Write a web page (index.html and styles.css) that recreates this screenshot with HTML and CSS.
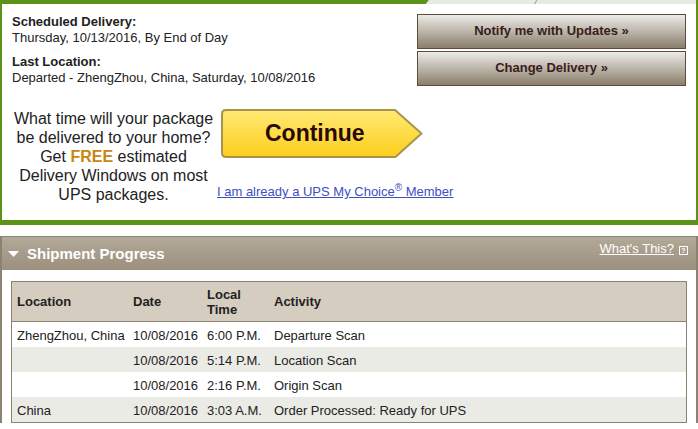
FILE: index.html
```html
<!DOCTYPE html>
<html lang="en">
<head>
<meta charset="utf-8">
<title>Tracking</title>
<link rel="stylesheet" href="styles.css">
</head>
<body>
<div class="tracking">
  <svg class="tabs" width="698" height="4" viewBox="0 0 698 4">
    <polygon points="0,0 429,0 426,4 0,4" fill="#5b9218"/>
    <polygon points="429,0 696,0 696,4 426,4" fill="#e9e9e3"/>
    <line x1="537" y1="0" x2="534.5" y2="4" stroke="#9a9a92" stroke-width="1"/>
    <rect x="696" y="0" width="2" height="4" fill="#5b9218"/>
  </svg>
  <div class="summary">
    <div class="summary-top">
      <div class="info">
        <div class="label">Scheduled Delivery:</div>
        <div>Thursday, 10/13/2016, By End of Day</div>
        <div class="label gap">Last Location:</div>
        <div>Departed - ZhengZhou, China, Saturday, 10/08/2016</div>
      </div>
      <div class="actions">
        <button class="btn" type="button">Notify me with Updates »</button>
        <button class="btn" type="button">Change Delivery »</button>
      </div>
    </div>
    <div class="promo">
      <p class="promo-text">What time will your package<br>be delivered to your home?<br>Get <b>FREE</b> estimated<br>Delivery Windows on most<br>UPS packages.</p>
      <div class="promo-action">
        <a class="continue" href="#">
          <svg width="202" height="49" viewBox="0 0 202 49">
            <defs>
              <linearGradient id="yel" x1="0" y1="0" x2="0" y2="1">
                <stop offset="0" stop-color="#ffe974"/>
                <stop offset="1" stop-color="#fccf1c"/>
              </linearGradient>
            </defs>
            <path d="M5,1 H174 L200.5,24.5 L174.5,48 H5 Q1,48 1,44 V5 Q1,1 5,1 Z" fill="url(#yel)" stroke="#a8934e" stroke-width="2" stroke-linejoin="round"/>
          </svg>
          <span>Continue</span>
        </a>
        <a class="member" href="#">I am already a UPS My Choice<sup>®</sup> Member</a>
      </div>
    </div>
  </div>
</div>

<div class="progress">
  <div class="progress-head">
    <svg class="caret" width="11" height="6" viewBox="0 0 11 6"><polygon points="0,0 11,0 5.5,6" fill="#fff"/></svg>
    <span class="title">Shipment Progress</span>
    <div class="whats">
      <a href="#">What's This?</a>
      <span class="help">?</span>
    </div>
  </div>
  <div class="progress-body">
    <table class="events">
      <thead>
        <tr>
          <th class="c1">Location</th>
          <th class="c2">Date</th>
          <th class="c3">Local<br>Time</th>
          <th class="c4">Activity</th>
        </tr>
      </thead>
      <tbody>
        <tr><td>ZhengZhou, China</td><td>10/08/2016</td><td>6:00 P.M.</td><td>Departure Scan</td></tr>
        <tr><td></td><td>10/08/2016</td><td>5:14 P.M.</td><td>Location Scan</td></tr>
        <tr><td></td><td>10/08/2016</td><td>2:16 P.M.</td><td>Origin Scan</td></tr>
        <tr><td>China</td><td>10/08/2016</td><td>3:03 A.M.</td><td>Order Processed: Ready for UPS</td></tr>
      </tbody>
    </table>
  </div>
</div>
</body>
</html>
```

FILE: styles.css
```css
* { box-sizing: border-box; }

body {
  margin: 0;
  width: 698px;
  font-family: "Liberation Sans", Arial, sans-serif;
  font-size: 13px;
  color: #222;
  background: #fff;
}

.tabs { display: block; }

.summary {
  height: 221px;
  border-left: 2px solid #5b9218;
  border-right: 2px solid #5b9218;
  border-bottom: 5px solid #5b9218;
}

.summary-top {
  display: flex;
  justify-content: space-between;
  padding: 8px 10px 0 10px;
}

.info { line-height: 16px; margin-top: 2px; }
.label { font-weight: bold; }
.gap { margin-top: 8px; }

.actions {
  display: flex;
  flex-direction: column;
  gap: 2px;
  margin-top: 2px;
  width: 269px;
}

.btn {
  height: 35px;
  border: 1px solid #5d4c38;
  background: linear-gradient(#ecebe6, #8a7e6c);
  font: bold 13px "Liberation Sans", Arial, sans-serif;
  color: #3a1c1c;
  padding: 0 0 2px;
  cursor: pointer;
}

.promo {
  display: flex;
  margin-top: 23px;
  padding-left: 10px;
}

.promo-text {
  margin: 0;
  width: 203px;
  text-align: center;
  font-size: 16px;
  line-height: 19px;
  color: #222;
}

.promo-text b { color: #c8850f; }

.promo-action {
  margin-left: 2px;
  display: flex;
  flex-direction: column;
  align-items: flex-start;
}

.continue {
  position: relative;
  display: flex;
  align-items: center;
  width: 202px;
  height: 49px;
  margin-left: 4px;
  padding-left: 44px;
  font-size: 23px;
  font-weight: bold;
  color: #2a0808;
  text-decoration: none;
}

.continue svg { position: absolute; left: 0; top: 0; }
.continue span { position: relative; }

.member {
  margin-top: 26px;
  color: #3e4fc2;
  font-size: 13px;
  line-height: 15px;
}

.member sup {
  font-size: 10px;
  line-height: 0;
  vertical-align: 5px;
}

.progress {
  margin-top: 11px;
  border: 2px solid #8b8271;
  border-top-width: 1px;
  border-bottom: 0;
}

.progress-head {
  display: flex;
  align-items: center;
  height: 33px;
  padding: 0 8px 0 6px;
  background: linear-gradient(#b3a998, #9b8f7d);
  color: #fff;
}

.caret { display: block; }

.title {
  margin-left: 8px;
  font-size: 15px;
  font-weight: bold;
}

.whats {
  margin-left: auto;
  align-self: flex-start;
  margin-top: 4px;
  display: flex;
  align-items: center;
  gap: 5px;
}

.whats a {
  color: #fff;
  font-size: 13px;
  line-height: 15px;
}

.help {
  width: 9px;
  height: 9px;
  margin-top: 3px;
  border: 1px solid #fff;
  font-size: 7px;
  font-weight: bold;
  line-height: 7px;
  text-align: center;
}

.progress-body { padding: 11px 9px 0; }

.events {
  width: 676px;
  border-collapse: separate;
  border-spacing: 0;
  border: 1px solid #8b8271;
  table-layout: fixed;
}

.events th {
  height: 40px;
  padding: 0 5px;
  background: #d5cdc0;
  border-bottom: 1px solid #8b8271;
  text-align: left;
  font-weight: bold;
  line-height: 15px;
  vertical-align: middle;
  color: #222;
}

.c1 { width: 116px; }
.c2 { width: 74px; }
.c3 { width: 67px; }

.events td {
  height: 25px;
  padding: 2px 5px 0;
  white-space: nowrap;
}

.events tbody tr:nth-child(even) td { background: #ebebe5; }
```
